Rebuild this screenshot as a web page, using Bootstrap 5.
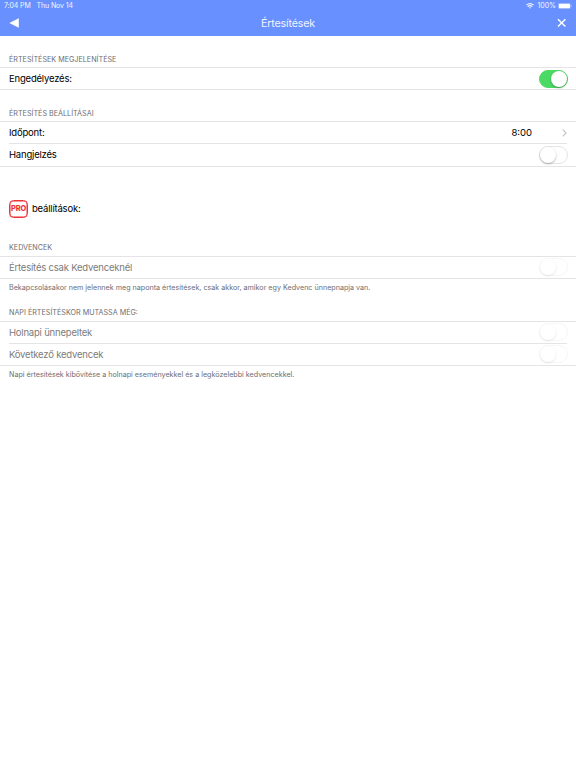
<!doctype html>
<html lang="hu">

<head>
    <meta charset="utf-8">
    <meta name="viewport" content="width=device-width, initial-scale=1">
    <title>Értesítések</title>
    <link href="https://cdn.jsdelivr.net/npm/bootstrap@5.3.5/dist/css/bootstrap.min.css" rel="stylesheet">
    <style>
        body {
            min-height: 100vh;
            font-family: Inter, "Liberation Sans", sans-serif;
            font-size: 9.5px;
            line-height: 12px;
            letter-spacing: -0.2px;
            color: #000;
            background-color: #fff;
        }

        .top-area {
            height: 36px;
            background-color: #6890ff;
            color: #fff;
        }

        .status-line {
            height: 12px;
            padding: 0 4px;
            font-size: 7px;
            letter-spacing: -0.12px;
            color: #f3f6ff;
        }

        .status-date {
            margin-left: 6px;
        }

        .battery-text {
            margin: 0 2px 0 3px;
            letter-spacing: 0;
        }

        .title-line {
            height: 23px;
            padding: 0 9px 1px;
        }

        .page-title {
            padding-top: 1px;
            font-size: 10.7px;
            letter-spacing: -0.15px;
            color: #f1f4ff;
        }

        .group-title {
            height: 31px;
            padding: 0 9px 3px;
            font-size: 7.2px;
            line-height: 10px;
            letter-spacing: 0;
            color: #6d6d72;
        }

        .group-title.low {
            padding-bottom: 2px;
        }

        .settings {
            border-top: 1px solid #e4e4e6;
            border-bottom: 1px solid #e4e4e6;
        }

        .setting {
            height: 21px;
            margin-left: 9px;
            margin-right: 9px;
        }

        .setting + .setting {
            height: 23px;
            border-top: 1px solid #e4e4e6;
        }

        .settings.off {
            color: #7c7c7c;
        }

        .settings.off .switch {
            margin-bottom: 1px;
        }

        .settings.off .setting + .setting {
            height: 22px;
        }

        .switch {
            width: 29px;
            height: 18px;
            margin-right: -1px;
            border: 1px solid #e5e5e5;
            border-radius: 9px;
        }

        .switch span {
            width: 16px;
            height: 16px;
            border-radius: 50%;
            background-color: #fff;
            box-shadow: 0 1px 2px rgba(0, 0, 0, 0.3);
        }

        .switch.on {
            background-color: #4cd964;
            border-color: #4cd964;
        }

        .off .switch {
            opacity: 0.3;
        }

        .time-value {
            margin-right: 30px;
            letter-spacing: 0;
        }

        .pro-line {
            height: 58px;
            padding: 33px 9px 0;
        }

        .pro-badge {
            width: 19px;
            height: 18px;
            border: 1px solid #ee3338;
            box-shadow: inset 0 0 0 0.5px #ee3338;
            border-radius: 4.5px;
            color: #ee3338;
            font-size: 7.4px;
            font-weight: 800;
            letter-spacing: -0.1px;
        }

        .group-note {
            padding: 4px 9px 0;
            height: 11px;
            font-size: 7.17px;
            line-height: 10px;
            letter-spacing: 0;
            color: #6d6d72;
        }
    </style>
</head>

<body>
    <header class="top-area">
        <div class="status-line d-flex align-items-center justify-content-between">
            <div class="d-flex">
                <span>7:04 PM</span>
                <span class="status-date">Thu Nov 14</span>
            </div>
            <div class="d-flex align-items-center">
                <svg width="8" height="6" viewBox="0 0 8 6" fill="none" stroke="currentColor" stroke-width="1.1">
                    <path d="M.4 2.2Q4-.9 7.6 2.2M1.7 3.6Q4 1.7 6.3 3.6" />
                    <path d="M2.9 4.6Q4 3.7 5.1 4.6L4 5.8Z" fill="currentColor" stroke="none" />
                </svg>
                <span class="battery-text">100%</span>
                <svg class="me-n1" width="14" height="6" viewBox="0 0 14 6">
                    <rect x=".25" y=".25" width="12.3" height="5.5" rx="1.5" fill="none" stroke="#b9caff" stroke-width=".5" />
                    <rect x=".8" y=".8" width="11.2" height="4.4" rx="1" fill="#fff" />
                    <path d="M13.1 2v2q.8-.3.8-1t-.8-1Z" fill="#b9caff" />
                </svg>
            </div>
        </div>
        <div class="title-line d-flex align-items-center justify-content-between">
            <svg width="10" height="10" viewBox="0 0 10 10">
                <path d="M0.3 5 9.8 .2V9.8Z" fill="#fff" />
            </svg>
            <span class="page-title">Értesítések</span>
            <svg width="10" height="10" viewBox="0 0 10 10">
                <path d="M1 1.2 8.4 8.6M8.4 1.2 1 8.6" fill="none" stroke="#fff" stroke-width="1.4" />
            </svg>
        </div>
    </header>

    <main>
        <div class="group-title low d-flex align-items-end">ÉRTESÍTÉSEK MEGJELENÍTÉSE</div>
        <div class="settings">
            <div class="setting d-flex align-items-center justify-content-between">
                <span>Engedélyezés:</span>
                <div class="switch on d-flex align-items-center justify-content-end"><span></span></div>
            </div>
        </div>

        <div class="group-title low d-flex align-items-end">ÉRTESÍTÉS BEÁLLÍTÁSAI</div>
        <div class="settings">
            <div class="setting d-flex align-items-center">
                <span>Időpont:</span>
                <span class="time-value ms-auto">8:00</span>
                <svg width="5" height="8" viewBox="0 0 5 8">
                    <path d="M.7.7 4.1 4 .7 7.3" fill="none" stroke="#c3c3c7" stroke-width="1.1" />
                </svg>
            </div>
            <div class="setting d-flex align-items-center justify-content-between">
                <span>Hangjelzés</span>
                <div class="switch d-flex align-items-center"><span></span></div>
            </div>
        </div>

        <div class="pro-line d-flex align-items-start">
            <div class="d-flex align-items-center">
                <span class="pro-badge d-flex align-items-center justify-content-center me-1">PRO</span>
                <span>beállítások:</span>
            </div>
        </div>

        <div class="group-title d-flex align-items-end">KEDVENCEK</div>
        <div class="settings off">
            <div class="setting d-flex align-items-center justify-content-between">
                <span>Értesítés csak Kedvenceknél</span>
                <div class="switch d-flex align-items-center"><span></span></div>
            </div>
        </div>
        <div class="group-note">Bekapcsolásakor nem jelennek meg naponta értesítések, csak akkor, amikor egy Kedvenc ünnepnapja van.</div>

        <div class="group-title d-flex align-items-end">NAPI ÉRTESÍTÉSKOR MUTASSA MÉG:</div>
        <div class="settings off">
            <div class="setting d-flex align-items-center justify-content-between">
                <span>Holnapi ünnepeltek</span>
                <div class="switch d-flex align-items-center"><span></span></div>
            </div>
            <div class="setting d-flex align-items-center justify-content-between">
                <span>Következő kedvencek</span>
                <div class="switch d-flex align-items-center"><span></span></div>
            </div>
        </div>
        <div class="group-note">Napi értesítések kibővítése a holnapi eseményekkel és a legközelebbi kedvencekkel.</div>
    </main>

    <script src="https://cdn.jsdelivr.net/npm/bootstrap@5.3.5/dist/js/bootstrap.bundle.min.js"></script>
</body>

</html>
